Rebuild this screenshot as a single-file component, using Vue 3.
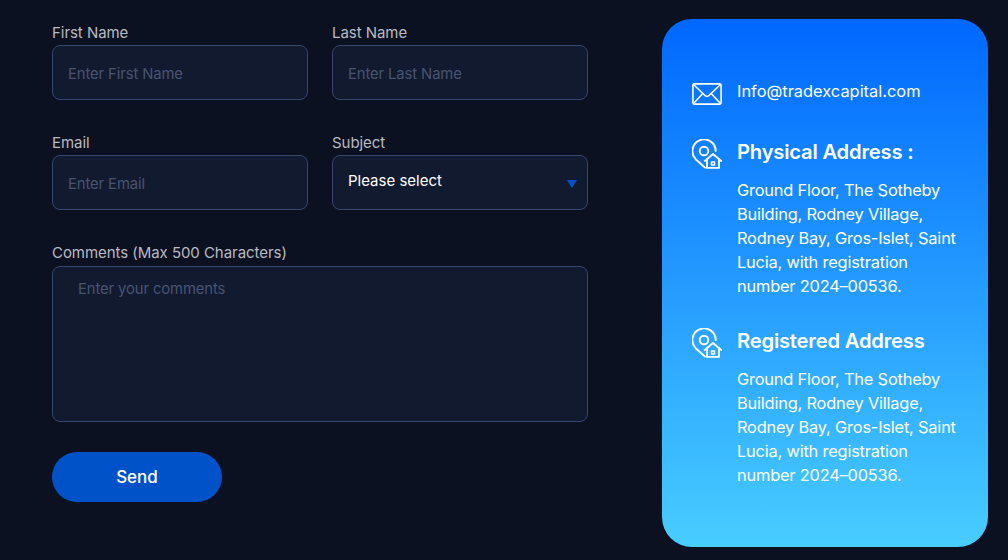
<script setup>
const addresses = [
  { title: 'Physical Address :' },
  { title: 'Registered Address' },
]
const addressText = 'Ground Floor, The Sotheby Building, Rodney Village, Rodney Bay, Gros-Islet, Saint Lucia, with registration number 2024–00536.'
</script>

<template>
  <div class="page">
    <form class="form" @submit.prevent>
      <div class="row">
        <label class="field">
          <span class="label">First Name</span>
          <input class="control" type="text" placeholder="Enter First Name" />
        </label>
        <label class="field">
          <span class="label">Last Name</span>
          <input class="control" type="text" placeholder="Enter Last Name" />
        </label>
      </div>
      <div class="row">
        <label class="field">
          <span class="label">Email</span>
          <input class="control" type="text" placeholder="Enter Email" />
        </label>
        <label class="field">
          <span class="label">Subject</span>
          <span class="select">
            <span class="select-text">Please select</span>
            <span class="caret"></span>
          </span>
        </label>
      </div>
      <label class="field comments">
        <span class="label">Comments (Max 500 Characters)</span>
        <textarea class="control area" placeholder="Enter your comments"></textarea>
      </label>
      <button class="send" type="submit">Send</button>
    </form>

    <aside class="card">
      <div class="mail-row">
        <svg class="mail-icon" viewBox="0 0 30 22" fill="none" stroke="#fff" stroke-width="1.6" stroke-linejoin="round" stroke-linecap="round">
          <rect x="0.9" y="0.9" width="28.2" height="20.2" rx="1.5" />
          <path d="M1.500 1.500 13 12.500c1.200 1.100 2.800 1.100 4 0L28.500 1.500" />
          <path d="M1.500 20.500 10.800 10.500M28.500 20.500 19.200 10.500" />
        </svg>
        <span class="mail-text">Info@tradexcapital.com</span>
      </div>
      <section v-for="a in addresses" :key="a.title" class="address">
        <div class="address-head">
          <svg class="pin-icon" viewBox="0 0 30 30" fill="none" stroke="#fff" stroke-width="1.900" stroke-linejoin="round" stroke-linecap="round">
            <path d="M13 28.600 3.700 20.200A11.660 11.660 0 1 1 23.700 12" />
            <circle cx="12" cy="12" r="4.300" />
            <path d="M12.800 22 21 15 29.200 22" />
            <path d="M15 20.800V28.900H27V20.800" />
            <path d="M19.500 23h3v3h-3z" stroke-width="1.500" />
          </svg>
          <h3 class="address-title">{{ a.title }}</h3>
        </div>
        <p class="address-text">{{ addressText }}</p>
      </section>
    </aside>
  </div>
</template>

<style scoped>
.page {
  width: 1008px;
  height: 560px;
  box-sizing: border-box;
  overflow: hidden;
  background: #0b1121;
  padding: 19px 20px 0 52px;
  display: flex;
  justify-content: space-between;
  font-family: "Inter", "Liberation Sans", sans-serif;
}
.form {
  width: 536px;
  display: flex;
  flex-direction: column;
}
.row {
  display: grid;
  grid-template-columns: 256px 256px;
  column-gap: 24px;
  margin-bottom: 29px;
}
.field {
  display: flex;
  flex-direction: column;
}
.label {
  height: 26px;
  line-height: 27px;
  font-size: 15px;
  letter-spacing: -0.05px;
  color: #b9bbc1;
}
.control {
  box-sizing: border-box;
  width: 100%;
  height: 55px;
  background: #121a30;
  border: 1px solid #36466f;
  border-radius: 8px;
  padding: 2px 15px 0;
  font: inherit;
  font-size: 14.800px;
  letter-spacing: -0.1px;
  color: #fff;
  outline: none;
  margin: 0;
}
.control::placeholder {
  color: #48546f;
  opacity: 1;
}
.select {
  box-sizing: border-box;
  height: 55px;
  background: #121a30;
  border: 1px solid #36466f;
  border-radius: 8px;
  padding: 0 10px 0 15px;
  display: flex;
  align-items: center;
  justify-content: space-between;
}
.select-text {
  font-size: 15px;
  color: #fff;
  position: relative;
  top: -2px;
}
.caret {
  width: 0;
  height: 0;
  border-left: 5.500px solid transparent;
  border-right: 5.500px solid transparent;
  border-top: 8px solid #0650c8;
  position: relative;
  top: 1px;
}
.comments .label {
  height: 27px;
}
.area {
  height: 156px;
  padding: 13px 25px;
  resize: none;
  display: block;
}
.send {
  margin-top: 30px;
  width: 170px;
  height: 50px;
  border: 0;
  border-radius: 25px;
  background: #0052c9;
  color: #fff;
  font: inherit;
  font-size: 17px;
  font-weight: 500;
}
.card {
  box-sizing: border-box;
  width: 326px;
  height: 528px;
  border-radius: 30px;
  background: linear-gradient(180deg, #0068ff 0%, #48cdff 100%);
  padding: 62px 28px 0 30px;
  color: #fff;
}
.mail-row {
  display: flex;
  align-items: flex-start;
  gap: 15px;
  height: 55px;
}
.mail-icon {
  width: 30px;
  height: 22px;
  margin-top: 2px;
  flex: none;
}
.mail-text {
  font-size: 16.400px;
  line-height: 20px;
}
.address {
  margin-bottom: 27px;
}
.address-head {
  display: flex;
  align-items: center;
  gap: 15px;
  height: 32px;
}
.pin-icon {
  width: 30px;
  height: 30px;
  flex: none;
  margin-top: 4px;
}
.address-title {
  margin: 0;
  font-size: 20.200px;
  line-height: 32px;
  font-weight: 600;
  letter-spacing: -0.2px;
}
.address-text {
  margin: 10px 0 0 45px;
  font-size: 16.400px;
  line-height: 24px;
  letter-spacing: -0.2px;
}
</style>
